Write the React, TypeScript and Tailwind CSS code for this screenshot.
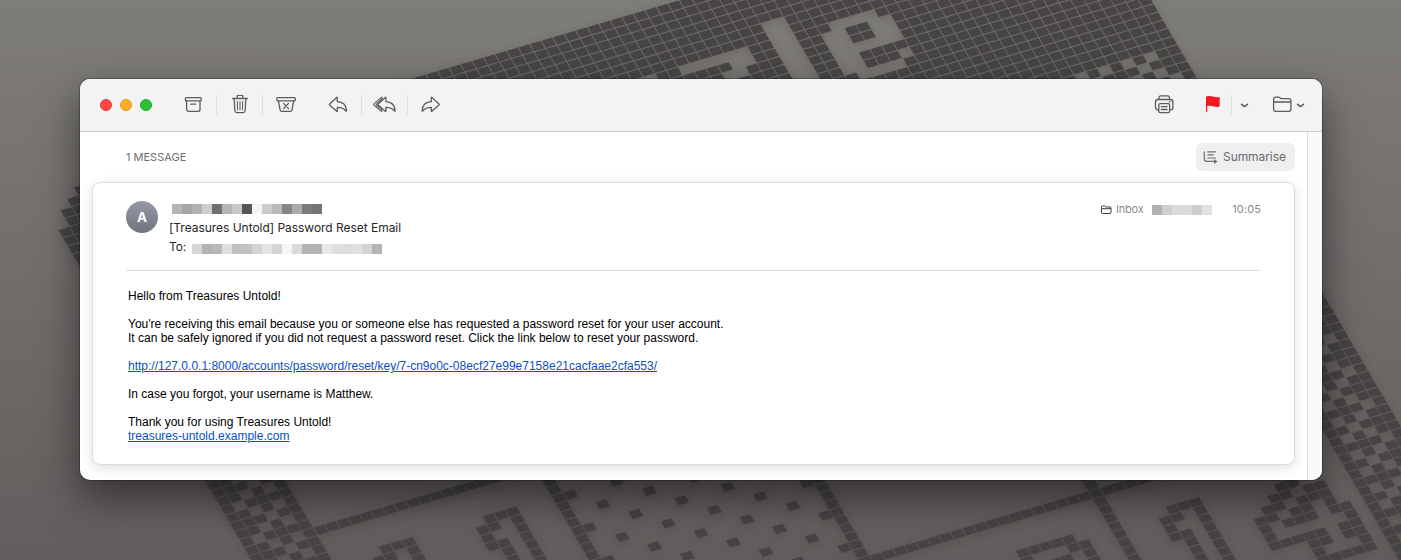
import React from "react";

/* ---------- Desktop wallpaper: a slanted mosaic of square tiles ---------- */

const COLS = 91;
const ROWS = 80;

const between = (v: number, lo: number, hi: number) => v >= lo && v <= hi;

// Rows of the lettering cut out of the dense upper area: row -> [from, to] columns.
const gaps: Record<number, [number, number][]> = {
  0: [[61, 62]],
  1: [[61, 62]],
  2: [[48, 50], [53, 58], [61, 62], [66, 69]],
  3: [[49, 50], [57, 58], [61, 62], [65, 66], [69, 70]],
  4: [[56, 57], [61, 62], [65, 66], [69, 70]],
  5: [[61, 62], [65, 70]],
  6: [[61, 62], [65, 66]],
  7: [[61, 62], [65, 66], [70, 70]],
  8: [[61, 62], [66, 69]],
  9: [[61, 62]],
};

// Rows of the figures laid on the sparse lower area.
const figures: Record<number, [number, number][]> = {
  43: [[10, 12], [19, 21]],
  44: [[9, 10], [12, 12], [18, 19], [21, 21]],
  45: [[12, 12], [18, 18], [21, 21]],
  46: [[18, 19], [21, 21]],
  47: [[19, 19], [21, 21]],
  48: [[19, 19], [21, 21]],
  49: [[21, 21]],
  63: [[57, 61], [70, 72]],
  64: [[57, 57], [61, 62], [69, 70], [72, 72], [79, 80]],
  65: [[59, 60], [62, 62], [69, 69], [72, 72], [78, 79], [81, 82]],
  66: [[62, 62], [69, 70], [72, 72], [77, 78], [80, 82]],
  67: [[70, 70], [72, 72], [76, 77], [79, 80], [82, 82]],
  68: [[70, 70], [72, 72], [76, 76], [78, 80], [82, 83]],
  69: [[70, 70], [72, 72], [76, 76], [83, 83]],
  70: [[72, 72], [76, 80], [82, 83]],
  71: [[79, 80], [82, 83]],
  72: [[79, 79], [83, 83]],
  73: [[79, 83]],
};

const inRuns = (runs: [number, number][] | undefined, i: number) =>
  !!runs && runs.some(([a, b]) => between(i, a, b));

const weaveHole = (i: number, j: number) =>
  (i % 2 === 0 && j % 2 !== 0) || (i % 4 === 3 && j % 4 === 0) || (i % 4 === 1 && j % 4 === 2);

function hasTile(i: number, j: number): boolean {
  if (j < 0) {
    const start = j === -1 ? 1 : -j - 1;
    if (i < start) return false;
  }
  if (j <= 26) {
    if (j >= 15 && between(i, 81, 89)) return !weaveHole(i, j);
    return !inRuns(gaps[j], i);
  }
  if (i === 0 || i === 5 || i === 85 || i === 90) return true;
  if (between(i, 1, 4) || between(i, 86, 89)) return !weaveHole(i, j);
  if (i === 25 || i === 45 || (i === 65 && j >= 50)) return true;
  if (j === 39 && between(i, 6, 25)) return true;
  if (j === 59 && between(i, 44, 84)) return true;
  if (between(i, 26, 44) && j >= 43 && j % 2 === 1) return i % 4 === (j % 4 === 1 ? 0 : 2);
  return inRuns(figures[j], i);
}

function mosaicPath(): string {
  const parts: string[] = [];
  for (let j = -5; j < ROWS; j++) {
    for (let i = 0; i < COLS; i++) {
      if (hasTile(i, j)) parts.push(`M${i + 0.04} ${j + 0.06}h.92v.88h-.92z`);
    }
  }
  return parts.join("");
}

const tiles = mosaicPath();

function Wallpaper() {
  return (
    <div className="absolute inset-0 bg-linear-to-b from-[#7f7d7a] via-[#706d6b] to-[#635e5d]">
      <svg width="1401" height="560" className="block">
        <defs>
          <filter id="soft" x="0" y="0" width="1401" height="560" filterUnits="userSpaceOnUse">
            <feGaussianBlur stdDeviation="5" />
          </filter>
        </defs>
        <g filter="url(#soft)" opacity=".24">
          <path d={tiles} transform="matrix(11.52 -3.38 4.77 8.15 57.8 232)" fill="#2a2625" />
        </g>
        <path d={tiles} transform="matrix(11.52 -3.38 4.77 8.15 57.8 229.8)" fill="#464342" fillOpacity=".95" />
      </svg>
    </div>
  );
}

/* ------------------------------- Icons ---------------------------------- */

function Glyph({ w = 20, className = "", children }: { w?: number; className?: string; children: React.ReactNode }) {
  return (
    <svg
      width={w}
      height={20}
      viewBox={`0 0 ${w} 20`}
      fill="none"
      stroke="#5c5c5c"
      strokeWidth="1.3"
      strokeLinecap="round"
      strokeLinejoin="round"
      className={`shrink-0 ${className}`}
    >
      {children}
    </svg>
  );
}

const Archive = () => (
  <Glyph className="ml-[31px]">
    <rect x="2.4" y="2.6" width="15.8" height="3.2" rx=".9" />
    <path d="M3.600 5.800v8.600a2 2 0 0 0 2 2h9.400a2 2 0 0 0 2-2V5.800M7.800 9.200h5" />
  </Glyph>
);

const Trash = () => (
  <Glyph className="ml-[13px]">
    <path d="M2.600 3.500h14.800M7.300 3.300V1.300q0-.9.900-.9h3.600q.9 0 .9.900v2M4.100 3.700l.8 12.100a1.900 1.900 0 0 0 1.900 1.800h6.400a1.900 1.900 0 0 0 1.900-1.800l.8-12.100" />
    <path d="M7.300 6.200l.3 8.600M10 6.200v8.600M12.700 6.200l-.3 8.600" strokeWidth="1.050" />
  </Glyph>
);

const Junk = () => (
  <Glyph className="ml-[13px]">
    <rect x=".8" y="2.600" width="18.500" height="3.200" rx=".9" />
    <path d="M2.400 5.800l1.700 9.100a1.900 1.900 0 0 0 1.900 1.500h8.100a1.900 1.900 0 0 0 1.900-1.500l1.700-9.100M7.600 8.400l4.900 5.200M12.500 8.400l-4.900 5.200" />
  </Glyph>
);

const arrowPath =
  "M9.300 2.700v4c5.500.2 8.800 3.400 9.200 9.100q0 .7-.6.200c-1.900-2.600-4.300-3.700-8.600-3.700v3.800q0 .6-.6.200L1.600 10q-.6-.6 0-1.100l7.100-6.500q.6-.4.600.3z";

const Reply = () => (
  <Glyph className="ml-[32px]">
    <path d={arrowPath} />
  </Glyph>
);

const ReplyAll = () => (
  <Glyph w={23} className="ml-[11px]">
    <path d={arrowPath} transform="translate(3.600 0)" />
    <path d="M8.900 4V2.700q0-.7-.6-.3L.9 8.900q-.6.500 0 1.100l7.400 6.300q.6.400.6-.2v-1.300L3.500 10q-.6-.6 0-1.100z" strokeWidth="1.100" />
  </Glyph>
);

const Forward = () => (
  <Glyph className="ml-[13px]">
    <path d={arrowPath} transform="translate(19.600 0) scale(-1 1)" />
  </Glyph>
);

const Printer = () => (
  <Glyph>
    <path d="M4.900 4.400V2.700a1.900 1.900 0 0 1 1.900-1.900h6.800a1.900 1.900 0 0 1 1.900 1.900v1.700M4.600 14.800H3.700a2.200 2.200 0 0 1-2.200-2.200V6.800a2.300 2.300 0 0 1 2.300-2.300h12.800a2.300 2.300 0 0 1 2.300 2.300v5.800a2.200 2.200 0 0 1-2.200 2.200h-.9" />
    <rect x="4.800" y="8.600" width="10.800" height="9" rx="1.400" />
    <path d="M7.300 11.600h5.800M7.300 14.500h5.800" />
    <circle cx="15.600" cy="6.700" r=".45" fill="#5c5c5c" strokeWidth=".7" />
  </Glyph>
);

const Flag = () => (
  <Glyph className="ml-[30px]">
    <path
      d="M2 2.100q0-.5.500-.7c2.500-.9 4.300-.5 6.500.2s3.700.7 5.800.3q.9-.2.900.6v8.400q0 .6-.6.800c-2.300.6-4.100.2-6.100-.4-2.100-.6-3.700-.9-5.800-.3V16.600q0 .6-.6.600T2 16.600z"
      fill="#f5191d"
      stroke="none"
    />
  </Glyph>
);

const Folder = () => (
  <Glyph className="ml-[23px]">
    <path d="M1.600 7V3.800a1.700 1.700 0 0 1 1.700-1.700h3.100q.7 0 1.200.4l1 .8q.5.400 1.200.4h7.100a2 2 0 0 1 2 2v8.600a2 2 0 0 1-2 2H3.600a2 2 0 0 1-2-2zM1.600 7h17.300" />
  </Glyph>
);

const Chevron = ({ className }: { className: string }) => (
  <Glyph w={9} className={className}>
    <path d="M1.600 9.300L4 11.300q.5.400 1 0L7.400 9.300" strokeWidth="1.500" />
  </Glyph>
);

const Divider = ({ className }: { className: string }) => (
  <span className={`h-5 w-px shrink-0 bg-[#dedede] ${className}`} />
);

/* ------------------------------ Toolbar --------------------------------- */

function Toolbar() {
  return (
    <header className="flex h-[53px] shrink-0 items-center border-b border-[#cdcdcd] bg-[#f3f3f3] pr-[17px] pl-5">
      <div className="flex gap-2">
        <span className="size-3 rounded-full border-[0.5px] border-[#e33e3c] bg-[#fe4644]" />
        <span className="size-3 rounded-full border-[0.5px] border-[#e09a20] bg-[#fdae24]" />
        <span className="size-3 rounded-full border-[0.5px] border-[#21ab2d] bg-[#28c131]" />
      </div>
      <Archive />
      <Divider className="ml-[13px]" />
      <Trash />
      <Divider className="ml-[12px]" />
      <Junk />
      <Reply />
      <Divider className="ml-[13px]" />
      <ReplyAll />
      <Divider className="ml-[11px]" />
      <Forward />
      <div className="ml-auto flex items-center">
        <Printer />
        <Flag />
        <Divider className="ml-[7px]" />
        <Chevron className="ml-[8px]" />
        <Folder />
        <Chevron className="ml-[4px]" />
      </div>
    </header>
  );
}

/* ------------------------------ Message --------------------------------- */

function Redacted({ shades, className = "" }: { shades: string[]; className?: string }) {
  return (
    <span className={`flex h-2.5 ${className}`}>
      {shades.map((c, i) => (
        <span key={i} className="h-2.5 w-2.5" style={{ backgroundColor: c }} />
      ))}
    </span>
  );
}

const senderShades = ["#b4b4b4", "#a5a5a5", "#b1b1b1", "#cecece", "#707070", "#b6b6b6", "#c9c9c9", "#555555", "#f5f5f5", "#cccccc", "#bababa", "#868686", "#acacac", "#7b7b7b", "#747474"];
const recipientShades = ["#d6d6d6", "#b3b3b3", "#b9b9b9", "#dfdfdf", "#c1bfc0", "#c3c3c3", "#d4d4d4", "#e4e4e4", "#d5d5d5", "#f5f5f5", "#dadada", "#b3b3b3", "#b3b3b3", "#e8e8e8", "#dfdfdf", "#dcdcdc", "#e0e0e0", "#d3d3d3", "#b3b3b3"];
const dateShades = ["#b1b1b1", "#cecece", "#dadada", "#dbdbdb", "#cecece", "#e1e1e1"];

function MessageHeader() {
  return (
    <div className="flex h-[88px] border-b border-[#dfdfdf] pt-[18px] text-[12px] text-[#262626]">
      <div className="flex size-8 items-center justify-center rounded-full bg-linear-to-b from-[#959aa6] to-[#70747f] pt-px text-[13.5px] font-bold text-white">
        A
      </div>
      <div className="ml-[11px] flex flex-col">
        <Redacted shades={senderShades} className="mt-[3px] ml-[3px]" />
        <p className="mt-[6px] h-[15px] leading-[15px] tracking-[-0.035px] whitespace-nowrap">[Treasures Untold] Password Reset Email</p>
        <div className="mt-[4px] flex h-[15px] leading-[15px]">
          <span className="w-[23px] tracking-[-0.1px]">To:</span>
          <Redacted shades={recipientShades} className="mt-[5px]" />
        </div>
      </div>
      <div className="mt-px ml-auto flex h-[15px] items-center text-[11px] text-[#8b8b8b]">
        <svg width="12" height="10" viewBox="0 0 12 10" fill="none" stroke="#3c3c3c" className="mr-[3px]">
          <path d="M1.500 3.500V1.900q0-.9.900-.9h2.300l1.100 1h4.300q.9 0 .9.900v4.700q0 .9-.9.900H2.400q-.9 0-.9-.9zM1.500 3.700h9.500" />
        </svg>
        <span className="w-[37px] pl-px tracking-[-0.02em]">Inbox</span>
        <Redacted shades={dateShades} />
        <span className="w-[49px] text-right tracking-[0.1px]">10:05</span>
      </div>
    </div>
  );
}

function MessageBody() {
  return (
    <div className="pt-[18px] pl-[2px] font-['Liberation_Sans',Arial,sans-serif] text-[12px] leading-[14px] whitespace-nowrap text-black">
      <p>Hello from Treasures Untold!</p>
      <p className="mt-[14px]">
        You're receiving this email because you or someone else has requested a password reset for your user account.
        <br />
        It can be safely ignored if you did not request a password reset. Click the link below to reset your password.
      </p>
      <p className="mt-[14px]">
        <a className="text-[#0b4fc4] underline">http://127.0.0.1:8000/accounts/password/reset/key/7-cn9o0c-08ecf27e99e7158e21cacfaae2cfa553/</a>
      </p>
      <p className="mt-[14px]">In case you forgot, your username is Matthew.</p>
      <p className="mt-[14px]">
        Thank you for using Treasures Untold!
        <br />
        <a className="text-[#0b4fc4] underline">treasures-untold.example.com</a>
      </p>
    </div>
  );
}

function SummariseButton() {
  return (
    <button className="flex h-7 w-[99px] items-center rounded-md bg-[#efefef] pl-[7px] text-[12px] text-[#6a6a6a]">
      <svg width="16" height="14" viewBox="0 0 16 14" fill="none" stroke="#6f6f6f" strokeLinecap="round" className="mr-[4px]">
        <path d="M1.300 1.800v6.900q0 2.700 2.700 2.700h7.600M4.800 1.800h7.600M4.800 4.900h5.700M4.800 8h7.600" strokeWidth="1.200" />
        <path d="M11 8.900l3.600 2.500-3.600 2.500z" fill="#6f6f6f" stroke="none" />
      </svg>
      <span className="tracking-[-0.07px]">Summarise</span>
    </button>
  );
}

export default function App() {
  return (
    <div className="relative h-[560px] w-[1401px] overflow-hidden font-['Inter',sans-serif]">
      <Wallpaper />
      <div className="relative px-20 pt-[79px]">
        <main className="flex h-[401px] w-[1242px] flex-col overflow-hidden rounded-[10px] bg-white shadow-[0_0_1px_1px_rgba(0,0,0,0.25),0_18px_40px_rgba(0,0,0,0.5)]">
          <Toolbar />
          <div className="flex min-h-0 flex-1">
            <section className="flex-1 pl-3">
              <div className="flex h-[50px] items-start justify-between pt-[11px] pr-3 pl-[34px]">
                <span className="pt-[7px] text-[11px] leading-[14px] text-[#707070]">1 MESSAGE</span>
                <SummariseButton />
              </div>
              <article className="mr-3 h-[283px] rounded-lg border border-[#dddddd] bg-white px-[33px] shadow-[0_3px_12px_rgba(0,0,0,0.13)]">
                <MessageHeader />
                <MessageBody />
              </article>
            </section>
            <div className="w-[15px] border-l border-[#dedede] bg-[#fafafa]" />
          </div>
        </main>
      </div>
    </div>
  );
}
